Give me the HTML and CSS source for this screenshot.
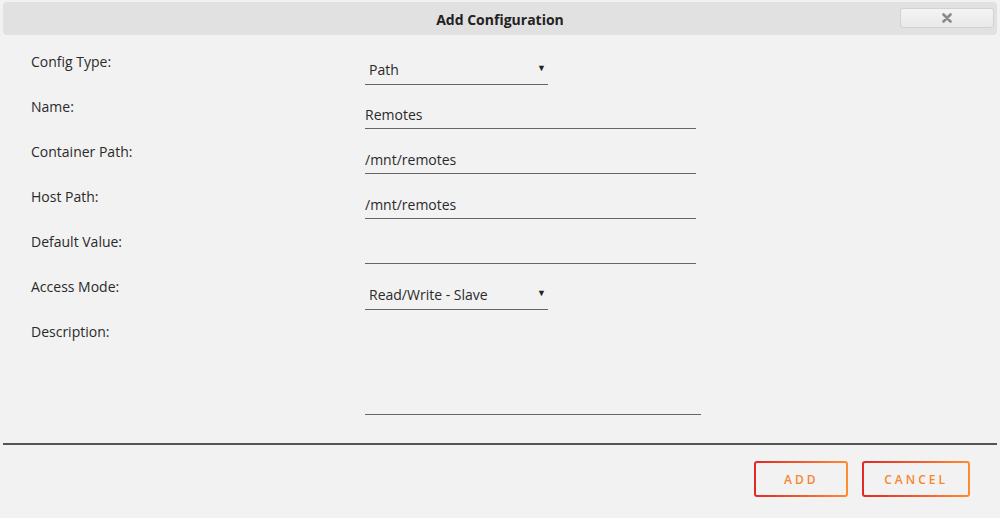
FILE: index.html
```html
<!DOCTYPE html>
<html lang="en">
<head>
    <meta charset="UTF-8">
    <meta name="viewport" content="width=device-width, initial-scale=1.0">
    <title>Add Configuration</title>
    <link rel="stylesheet" href="styles.css">
</head>
<body>
    <div class="dialog">
        <div class="titlebar">
            <span class="title">Add Configuration</span>
            <button type="button" class="close" aria-label="Close">
                <svg width="10" height="10" viewBox="0 0 10 10">
                    <path d="M1.5 1.5 L8.5 8.5 M8.5 1.5 L1.5 8.5" stroke="#8a8a8a" stroke-width="2.6" stroke-linecap="round"/>
                </svg>
            </button>
        </div>

        <form class="config-form">
            <div class="row">
                <label>Config Type:</label>
                <div class="select">
                    <select>
                        <option>Path</option>
                        <option>Port</option>
                        <option>Variable</option>
                        <option>Label</option>
                        <option>Device</option>
                    </select>
                </div>
            </div>
            <div class="row">
                <label>Name:</label>
                <input type="text" value="Remotes">
            </div>
            <div class="row">
                <label>Container Path:</label>
                <input type="text" value="/mnt/remotes">
            </div>
            <div class="row">
                <label>Host Path:</label>
                <input type="text" value="/mnt/remotes">
            </div>
            <div class="row">
                <label>Default Value:</label>
                <input type="text" value="">
            </div>
            <div class="row">
                <label>Access Mode:</label>
                <div class="select">
                    <select>
                        <option>Read/Write - Slave</option>
                        <option>Read/Write</option>
                        <option>Read Only</option>
                    </select>
                </div>
            </div>
            <div class="row row-desc">
                <label>Description:</label>
                <textarea></textarea>
            </div>
        </form>

        <div class="actions">
            <button type="button" class="btn btn-add">ADD</button>
            <button type="button" class="btn">CANCEL</button>
        </div>
    </div>
</body>
</html>
```

FILE: styles.css
```css
body {
    margin: 0;
    background: #f2f2f2;
    font-family: "Open Sans", "Liberation Sans", sans-serif;
    font-size: 14px;
    color: #2a2a2a;
}
.titlebar {
    position: relative;
    margin: 2px 3px 0;
    height: 33px;
    background: #e1e1e1;
    border-radius: 4px;
    display: flex;
    align-items: center;
    justify-content: center;
}
.title {
    font-weight: bold;
    color: #222;
    padding-top: 1px;
}
.close {
    position: absolute;
    right: 3px;
    top: 6px;
    width: 94px;
    height: 20px;
    padding: 0;
    border: 1px solid #d2d2d2;
    border-radius: 3px;
    background: linear-gradient(#f4f4f4, #e9e9e9);
    display: flex;
    align-items: center;
    justify-content: center;
}
.config-form {
    padding: 17px 0 0 31px;
}
.row {
    display: grid;
    grid-template-columns: 334px auto;
    align-items: start;
    height: 45px;
}
.row label {
    line-height: 20px;
}
input, select, textarea {
    font-family: inherit;
    font-size: 14px;
    color: #2a2a2a;
    background: transparent;
    border: none;
    border-bottom: 1px solid #666;
    border-radius: 0;
    margin: 7px 0 0;
    padding: 0 0 4px;
    line-height: 20px;
    outline: none;
}
input {
    width: 331px;
    height: 25px;
    box-sizing: border-box;
}
.select {
    position: relative;
    width: 183px;
}
.select select {
    appearance: none;
    width: 183px;
    height: 26px;
    box-sizing: border-box;
    padding-left: 4px;
}
.select::after {
    content: "\25BC";
    position: absolute;
    right: 2px;
    top: 9px;
    font-size: 9px;
    color: #222;
    pointer-events: none;
}
.row-desc {
    height: 100px;
}
textarea {
    width: 336px;
    height: 86px;
    box-sizing: border-box;
    resize: none;
}
.actions {
    border-top: 2px solid #555;
    margin: 21px 3px 0;
    padding: 16px 27px 0 0;
    display: flex;
    justify-content: flex-end;
    gap: 14px;
}
.btn {
    height: 36px;
    padding: 0 20px;
    border: 2px solid transparent;
    border-radius: 3px;
    background: linear-gradient(#f2f2f2, #f2f2f2) padding-box,
                linear-gradient(90deg, #e22828, #ff8c2f) border-box;
    color: #f7862f;
    font-family: inherit;
    font-size: 12px;
    font-weight: 600;
    letter-spacing: 3px;
}
.btn-add {
    width: 94px;
}
```
